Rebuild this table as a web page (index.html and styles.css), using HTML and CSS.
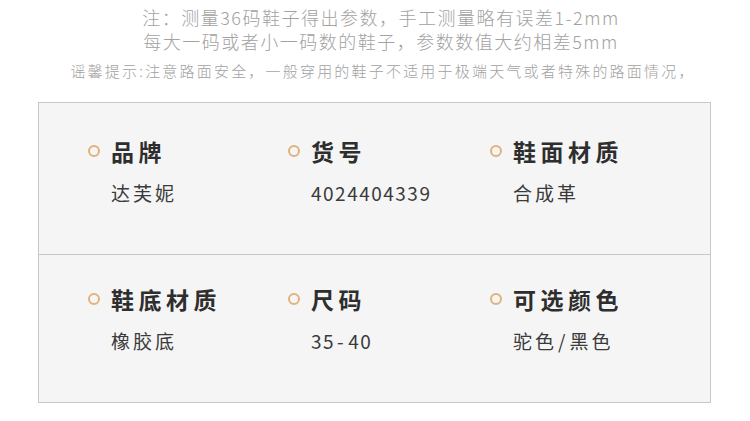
FILE: index.html
```html
<!DOCTYPE html>
<html lang="zh">
<head>
<meta charset="utf-8">
<link rel="stylesheet" href="styles.css">
</head>
<body>
<div class="page">
  <div class="notes">
    <p class="note">注：测量36码鞋子得出参数，手工测量略有误差1-2mm</p>
    <p class="note">每大一码或者小一码数的鞋子，参数数值大约相差5mm</p>
  </div>
  <p class="tip">谣馨提示:注意路面安全，一般穿用的鞋子不适用于极端天气或者特殊的路面情况，</p>
  <div class="table">
    <div class="row">
      <div class="cell"><div class="title"><span class="dot"></span>品牌</div><div class="value">达芙妮</div></div>
      <div class="cell"><div class="title"><span class="dot"></span>货号</div><div class="value num">4024404339</div></div>
      <div class="cell"><div class="title"><span class="dot"></span>鞋面材质</div><div class="value">合成革</div></div>
    </div>
    <div class="row">
      <div class="cell"><div class="title"><span class="dot"></span>鞋底材质</div><div class="value">橡胶底</div></div>
      <div class="cell"><div class="title"><span class="dot"></span>尺码</div><div class="value num">35<span class="sep">-</span>40</div></div>
      <div class="cell"><div class="title"><span class="dot"></span>可选颜色</div><div class="value">驼色<span class="sep">/</span>黑色</div></div>
    </div>
  </div>
</div>
</body>
</html>
```

FILE: styles.css
```css
* { box-sizing: border-box; }
html, body { margin: 0; padding: 0; background: #fff; }
body { font-family: "Noto Sans CJK SC", "Noto Sans", sans-serif; }
.page { width: 750px; height: 421px; overflow: hidden; padding-top: 5px; }
.notes { text-align: center; color: #a2a2a2; font-size: 18px; font-weight: 300; line-height: 24px; letter-spacing: 1.5px; padding-left: 12px; }
.note { margin: 0; }
.tip { margin: 7px 0 0; padding-left: 16px; text-align: center; color: #a2a2a2; font-size: 15px; font-weight: 300; line-height: 22px; letter-spacing: 2.2px; }
.table { margin: 20px 0 0 38px; width: 673px; height: 301px; border: 1px solid #c8c8c8; background: #f5f5f5; display: flex; flex-direction: column; }
.row { height: 151px; display: grid; grid-template-columns: 200px 202px 1fr; padding-left: 49px; padding-top: 33px; }
.row + .row { height: auto; flex: 1; border-top: 1px solid #c8c8c8; padding-top: 29px; }
.cell { display: flex; flex-direction: column; }
.title { display: flex; align-items: center; font-size: 23px; font-weight: 700; color: #2e2e2e; letter-spacing: 4.5px; line-height: 30px; }
.dot { width: 12px; height: 12px; border: 2px solid #e2b27c; border-radius: 50%; margin-right: 11px; flex: none; }
.value { margin: 14px 0 0 23px; font-size: 19px; color: #3a3a3a; letter-spacing: 3px; line-height: 26px; }
.value.num { letter-spacing: 1.5px; }
.num .sep { padding: 0 3px 0 2px; }
.sep { padding: 0 1px; }
```
